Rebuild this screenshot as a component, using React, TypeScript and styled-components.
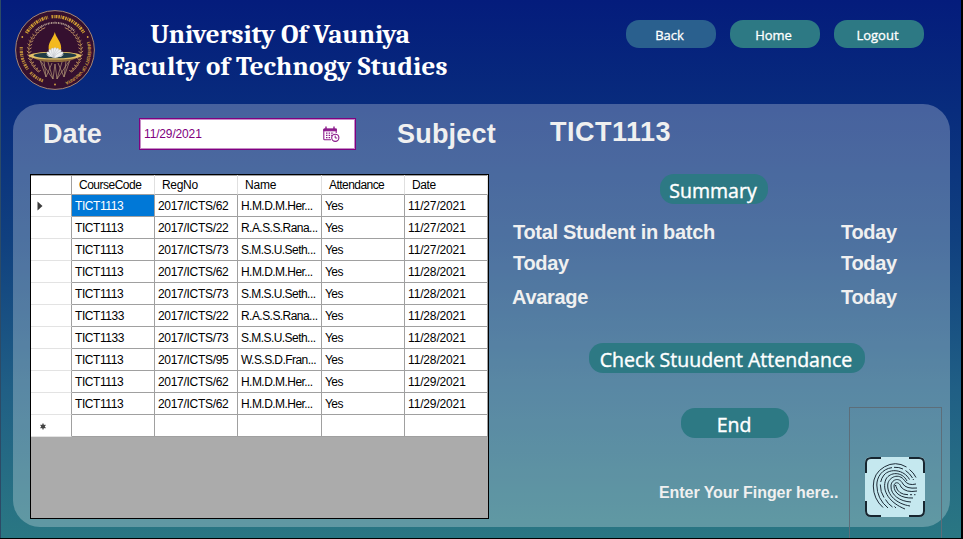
import React from "react";
import styled, { createGlobalStyle } from "styled-components";

const GlobalStyle = createGlobalStyle`
  *, *::before, *::after { box-sizing: border-box; }
  body { margin: 0; overflow: hidden; }
`;

const Window = styled.div`
  width: 963px;
  height: 539px;
  display: flex;
  flex-direction: column;
  overflow: hidden;
  border: solid #000;
  border-width: 0 2px 1px 0;
  box-shadow: inset 1px 0 0 #2c4a66;
  background: linear-gradient(180deg, #041c7c 0, #082c7d 110px, #10407f 240px, #205f85 390px, #2a7783 538px);
  background-origin: border-box;
  font-family: "Liberation Sans", Arial, sans-serif;
`;

const Header = styled.header`
  display: flex;
  height: 104px;
  padding: 10px 37px 0 15px;
  flex: none;
`;

const Title = styled.h1`
  margin: 9px 0 0 11px;
  width: 346px;
  font: 700 27px/32px Cambria, Caladea, "Noto Serif", "Liberation Serif", serif;
  color: #fff;
  text-align: center;
  white-space: nowrap;
`;

const TitleLine = styled.div<{ $spacing: number; $shift?: number }>`
  letter-spacing: ${(p) => p.$spacing}px;
  padding-left: ${(p) => p.$shift ?? 0}px;
`;

const Nav = styled.nav`
  margin: 10px 0 0 auto;
  display: flex;
  gap: 14px;
`;

const NavButton = styled.button<{ $muted?: boolean }>`
  width: 90px;
  height: 28px;
  padding: 2px 3px 0 0;
  border: 0;
  border-radius: 13px;
  background: ${(p) => (p.$muted ? "#2a608e" : "#2d7984")};
  color: #fff;
  font: 500 13px/20px "Open Sans", "Noto Sans", sans-serif;
  -webkit-text-stroke: 0.3px #fff;
`;

const Panel = styled.main`
  margin-left: 13px;
  width: 937px;
  height: 423px;
  flex: none;
  border-radius: 27px;
  background: rgba(255, 255, 255, 0.26);
`;

const FilterBar = styled.section`
  height: 70px;
  display: flex;
  padding-left: 30px;
  color: #f0f0f0;
`;

const Heading = styled.div<{ $width: number; $top: number; $spacing?: number }>`
  width: ${(p) => p.$width}px;
  margin-top: ${(p) => p.$top}px;
  font-size: 27px;
  line-height: 32px;
  font-weight: 700;
  letter-spacing: ${(p) => p.$spacing ?? 0}px;
  white-space: nowrap;
`;

const DateField = styled.div`
  width: 217px;
  height: 32px;
  margin: 14px 41px 0 0;
  padding: 0 15px 0 4px;
  display: flex;
  align-items: center;
  justify-content: space-between;
  border: 1px solid #800080;
  box-shadow: inset 0 0 0 1px #c68bc6;
  background: #fff;
  color: #800080;
  font-size: 12px;
  letter-spacing: -0.15px;
`;

const Body = styled.div`
  display: flex;
  padding-left: 17px;
`;

const DataGrid = styled.div`
  width: 459px;
  height: 345px;
  border: 1px solid #000;
  background: #ababab;
  color: #000;
  font-size: 12px;
`;

const GridRow = styled.div<{ $header?: boolean }>`
  display: grid;
  grid-template-columns: 41px 83px 83px 84px 83px 83px;
  height: ${(p) => (p.$header ? 20 : 22)}px;
  background: #fff;
  line-height: ${(p) => (p.$header ? 21 : 22)}px;
`;

const Cell = styled.div<{ $selected?: boolean; $spacing?: number }>`
  border: solid #a0a0a0;
  border-width: 0 1px 1px 0;
  padding-left: 3px;
  overflow: hidden;
  white-space: nowrap;
  letter-spacing: ${(p) => p.$spacing ?? -0.3}px;
  background: ${(p) => (p.$selected ? "#0078d7" : "#fff")};
  color: ${(p) => (p.$selected ? "#fff" : "#000")};
`;

const HeadCell = styled(Cell)`
  border-right-color: #e0e0e0;
  padding-left: 7px;
  box-shadow: inset 0 1px 0 #a0a0a0;
`;

const RowHead = styled(Cell)`
  display: flex;
  align-items: center;
  padding-left: 6px;
  border-bottom-color: #e3e3e3;
`;

const CornerCell = styled(Cell)`
  box-shadow: inset 0 1px 0 #a0a0a0;
`;

const Side = styled.section`
  flex: 1;
  display: flex;
  flex-direction: column;
  color: #f0f0f0;
`;

const ActionButton = styled.button<{ $width: number; $left: number; $top: number }>`
  width: ${(p) => p.$width}px;
  height: 30px;
  flex: none;
  margin: ${(p) => p.$top}px 0 0 ${(p) => p.$left}px;
  padding: 4px 2px 0 0;
  border: 0;
  border-radius: 14px;
  background: #2d7984;
  color: #fff;
  font: 500 19.5px/26px "Open Sans", "Noto Sans", sans-serif;
  -webkit-text-stroke: 0.4px #fff;
  white-space: nowrap;
`;

const Stats = styled.dl`
  margin: 16px 0 0 23px;
  display: grid;
  grid-template-columns: 329px 100px;
  grid-template-rows: 31px 34px 33px;
  font-size: 20px;
  line-height: 24px;
  font-weight: 700;
  letter-spacing: -0.3px;
`;

const StatName = styled.dt`
  margin: 0 0 0 1px;
  &:last-of-type { margin-left: 0; }
`;

const StatValue = styled.dd`
  margin: 0;
`;

const Scan = styled.div`
  display: flex;
  align-items: flex-start;
`;

const ScanColumn = styled.div`
  width: 360px;
`;

const ScanPrompt = styled.p`
  margin: 45px 0 0 170px;
  font-size: 16px;
  line-height: 20px;
  font-weight: 700;
  letter-spacing: -0.06px;
  white-space: nowrap;
`;

const ScanFrame = styled.div`
  width: 93px;
  height: 132px;
  margin-top: 34px;
  padding: 49px 0 0 15px;
  border: 1px solid #5c6e7a;
  border-bottom: 0;
`;

const petals = [-60, -38, -18, 0, 18, 38, 60];
const leaves = Array.from({ length: 15 }, (_, i) => 118 + i * 8);
const rays: [number, number, number, number][] = [
  [25, 50, 31, 67], [31, 67, 29, 51], [25, 50, 38, 69], [31, 67, 37, 53], [38, 69, 33, 52],
  [38, 69, 40, 54], [42, 69, 40, 54], [42, 69, 47, 52], [49, 67, 43, 53], [49, 67, 51, 51], [42, 69, 55, 50], [49, 67, 55, 50],
];

function Crest() {
  return (
    <svg width="80" height="80" viewBox="0 0 80 80">
      <defs>
        <path id="crestRight" d="M 71.8 32 A 33 33 0 0 1 47 72.5" />
      </defs>
      <circle cx="40" cy="40" r="39.4" fill="#35102f" stroke="#a58674" strokeWidth="1" />
      <g fill="none" stroke="#b98a3b">
        <path d="M11.5 23 A33.5 33.5 0 0 1 33 7.3" strokeWidth="3.4" stroke="#cf9c33" strokeDasharray="1.2 .8 2 .7 .8 .7" />
        <path d="M36.5 6.8 A33.5 33.5 0 0 1 69 23" strokeWidth="3.4" stroke="#cf9c33" strokeDasharray="1.5 .8 .9 .8 2 .9" />
        <path d="M6.3 37 A33.5 33.5 0 0 0 13 59.5" strokeWidth="3.2" strokeDasharray="1.6 .8 .8 .9 2 .7" />
        <path d="M15.5 62.5 A33.5 33.5 0 0 0 28 71" strokeWidth="3.2" strokeDasharray="1.6 .8 .8 .9 2 .7" />
        <path d="M21 20.5 A27.2 27.2 0 0 1 59 20.5" strokeWidth="1.8" stroke="#b9a394" strokeDasharray="1.2 .6 .8 .8" />
        <path d="M19 24.5 A26 26 0 0 0 24 61 M61 24.5 A26 26 0 0 1 56 61" strokeWidth=".7" />
      </g>
      <text fill="#c9983f" fontSize="4.6" fontWeight="700" fontFamily="Liberation Sans, sans-serif">
        <textPath href="#crestRight" textLength="50">UNIVERSITY OF VAVUNIYA</textPath>
      </text>
      <g stroke="#b88a62" strokeWidth="1">
        {leaves.map((a) => {
          const t = (a * Math.PI) / 180;
          const x = 26 * Math.cos(t);
          const y = 40 - 26 * Math.sin(t) + 2;
          return (
            <g key={a}>
              <path d={`M${40 + x} ${y}l-2.2-2M${40 + x} ${y}l2.4-1.5`} />
              <path d={`M${40 - x} ${y}l2.2-2M${40 - x} ${y}l-2.4-1.5`} />
            </g>
          );
        })}
      </g>
      <g stroke="#b59a77" strokeWidth=".7">
        {rays.map(([a, b, c, d]) => <path key={`${a}-${b}-${c}-${d}`} d={`M${a} ${b}L${c} ${d}`} />)}
      </g>
      <path d="M14.5 46 Q22 51 33 52 L47 52 Q58 51 65.5 46" fill="#8d6a3b" />
      <ellipse cx="40" cy="45.7" rx="26.3" ry="3.9" fill="#e2c067" />
      <ellipse cx="40" cy="45.4" rx="21.5" ry="2.9" fill="#203b46" />
      <path d="M31 44.5h18l-3 2.4H34z" fill="#c5ced0" />
      <path d="M39.8 22 C41 28 46.2 31 46.2 38 C46.2 42 43 44 39.8 44 C36.5 44 33.6 42 33.6 38 C33.6 31 38.5 28 39.8 22Z" fill="#f3b91f" />
      <g fill="#eef0f2" stroke="#9fa3ae" strokeWidth=".3">
        {petals.map((a) => <ellipse key={a} cx="40" cy="42.5" rx="1.8" ry="5" transform={`rotate(${a} 40 47)`} />)}
      </g>
      <g fill="#d9a642">
        <circle cx="7.3" cy="27" r=".9" />
        <circle cx="72.7" cy="27" r=".9" />
        <circle cx="40" cy="74.5" r=".9" />
      </g>
    </svg>
  );
}

function CalendarClock() {
  return (
    <svg width="17" height="16" viewBox="0 0 17 16" fill="none" stroke="#8a1a8a">
      <path d="M.8 3.5V13a.8.8 0 0 0 .8.8H8M.8 3h12.4v4" strokeWidth="1.1" />
      <path d="M.8 3.2h12.4v1.6H.8z" fill="#800080" />
      <path d="M3 .5v2.5M11 .5v2.5" strokeWidth="1.4" />
      <path d="M3 7.2h8M3 9.4h6M3 11.6h5" strokeWidth="1.3" strokeDasharray="1.5 1.1" />
      <circle cx="12.3" cy="11.8" r="3.6" fill="#fff" strokeWidth="1.1" />
      <path d="M12.2 9.6v2.4h2" />
    </svg>
  );
}

function Fingerprint() {
  return (
    <svg width="60" height="60" viewBox="0 0 60 60" fill="none">
      <rect width="60" height="60" rx="5" fill="#c5e8ef" />
      <path d="M1 16V6Q1 1 6 1H16M44 1H54Q59 1 59 6V16M59 44V54Q59 59 54 59H44M16 59H6Q1 59 1 54V44" stroke="#172630" strokeWidth="2" />
      <g stroke="#1e2c38" strokeWidth="1">
        <path d="M51 20.5Q48.5 15.5 44.5 12.5M41.5 10A22 22 0 0 0 8.3 29Q8.5 42 18 50.5" />
        <path d="M47.5 21Q45 16.5 40.5 13.5M38 12Q34 10 29 10.3M27 10.6C17 12 11.8 20 11.8 28Q12 42 23 51" />
        <path d="M44.5 22.5C39 12.5 25 11 19 18Q16.5 21 15.7 25M15.3 27.5Q15.3 35 19 40.5M20.5 42.5Q23 47 27.5 50" />
        <path d="M48 23l.6-1M42 24C37 14 25 15 21 22C16 34 25 46 40 52" />
        <path d="M51 27Q43 29 39.5 23.5C34 15.5 24 20 22.8 27C21.5 38 32 47 45 49" />
        <path d="M52 31Q41 32 38 27C34 19 26 23 26 29C25.5 38 35 44.5 46 45" />
        <path d="M52 34Q41 36 36 30C34 24 29 25 29 29C29 36 36 41.5 48 41" />
        <path d="M31 28.5v1Q33 37.5 43 37.7M45 37.7h2M49 37.7h1.5M29.5 49.5l1.5 1.5M30.5 28v1" />
      </g>
    </svg>
  );
}

function CurrentRowMark() {
  return <svg width="6" height="10" viewBox="0 0 6 10"><path d="M.5 .5L5.5 5L.5 9.5Z" fill="#3b3b3b" /></svg>;
}

function NewRowMark() {
  return (
    <svg width="11" height="10" viewBox="0 0 11 10">
      <path d="M6 2.5v6M3.5 4l5 3M8.5 4l-5 3" stroke="#444" strokeWidth="1.2" />
      <circle cx="6" cy="5.5" r="2" fill="#444" />
    </svg>
  );
}

const columns = ["CourseCode", "RegNo", "Name", "Attendance", "Date"];
const headSpacing = [-0.5, -0.3, -0.2, -0.55, -0.4];
const records = [
  ["TICT1113", "2017/ICTS/62", "H.M.D.M.Her...", "Yes", "11/27/2021"],
  ["TICT1113", "2017/ICTS/22", "R.A.S.S.Rana...", "Yes", "11/27/2021"],
  ["TICT1113", "2017/ICTS/73", "S.M.S.U.Seth...", "Yes", "11/27/2021"],
  ["TICT1113", "2017/ICTS/62", "H.M.D.M.Her...", "Yes", "11/28/2021"],
  ["TICT1113", "2017/ICTS/73", "S.M.S.U.Seth...", "Yes", "11/28/2021"],
  ["TICT1133", "2017/ICTS/22", "R.A.S.S.Rana...", "Yes", "11/28/2021"],
  ["TICT1133", "2017/ICTS/73", "S.M.S.U.Seth...", "Yes", "11/28/2021"],
  ["TICT1113", "2017/ICTS/95", "W.S.S.D.Fran...", "Yes", "11/28/2021"],
  ["TICT1113", "2017/ICTS/62", "H.M.D.M.Her...", "Yes", "11/29/2021"],
  ["TICT1113", "2017/ICTS/62", "H.M.D.M.Her...", "Yes", "11/29/2021"],
];
const columnSpacing = [-0.43, -0.3, -0.55, -0.6, -0.15];
const stats = [["Total Student in batch", "Today"], ["Today", "Today"], ["Avarage", "Today"]];

export default function App() {
  return (
    <>
      <GlobalStyle />
      <Window>
        <Header>
          <Crest />
          <Title>
            <TitleLine $spacing={-0.12} $shift={2}>University Of Vauniya</TitleLine>
            <TitleLine $spacing={0.2}>Faculty of Technogy Studies</TitleLine>
          </Title>
          <Nav>
            <NavButton $muted>Back</NavButton>
            <NavButton>Home</NavButton>
            <NavButton>Logout</NavButton>
          </Nav>
        </Header>
        <Panel>
          <FilterBar>
            <Heading $width={96} $top={14} $spacing={0.1}>Date</Heading>
            <DateField>11/29/2021<CalendarClock /></DateField>
            <Heading $width={153} $top={14} $spacing={0.2}>Subject</Heading>
            <Heading $width={150} $top={12} $spacing={0.5}>TICT1113</Heading>
          </FilterBar>
          <Body>
            <DataGrid>
              <GridRow $header>
                <CornerCell />
                {columns.map((name, c) => <HeadCell key={name} $spacing={headSpacing[c]}>{name}</HeadCell>)}
              </GridRow>
              {records.map((record, r) => (
                <GridRow key={r}>
                  <RowHead>{r === 0 && <CurrentRowMark />}</RowHead>
                  {record.map((value, c) => (
                    <Cell key={c} $selected={r === 0 && c === 0} $spacing={columnSpacing[c]}>{value}</Cell>
                  ))}
                </GridRow>
              ))}
              <GridRow>
                <RowHead><NewRowMark /></RowHead>
                {columns.map((name) => <Cell key={name} />)}
              </GridRow>
            </DataGrid>
            <Side>
              <ActionButton $width={108} $left={171} $top={0}>Summary</ActionButton>
              <Stats>
                {stats.map(([name, value], i) => (
                  <React.Fragment key={i}>
                    <StatName>{name}</StatName>
                    <StatValue>{value}</StatValue>
                  </React.Fragment>
                ))}
              </Stats>
              <ActionButton $width={276} $left={100} $top={25}>Check Stuudent Attendance</ActionButton>
              <Scan>
                <ScanColumn>
                  <ActionButton $width={108} $left={192} $top={35}>End</ActionButton>
                  <ScanPrompt>Enter Your Finger here..</ScanPrompt>
                </ScanColumn>
                <ScanFrame><Fingerprint /></ScanFrame>
              </Scan>
            </Side>
          </Body>
        </Panel>
      </Window>
    </>
  );
}
